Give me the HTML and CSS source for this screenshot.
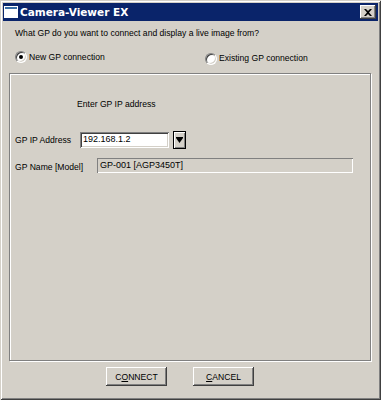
FILE: index.html
```html
<!DOCTYPE html>
<html lang="en">
<head>
  <meta charset="UTF-8">
  <title>Camera-Viewer EX</title>
  <link rel="stylesheet" href="styles.css">
</head>
<body>

  <div class="window">
    <div class="titlebar">
      <svg class="app-icon" width="14" height="12" viewBox="0 0 14 12">
        <rect x="0.5" y="0.5" width="13" height="11" fill="#fff" stroke="#fff"/>
        <rect x="1" y="1" width="12" height="2" fill="#3a6ea5"/>
      </svg>
      <span class="title">Camera-Viewer EX</span>
      <button class="close-btn">
        <svg width="8" height="7" viewBox="0 0 8 7">
          <path d="M0 0h2l2 2 2-2h2L5 3.5 8 7H6L4 5 2 7H0l3-3.5z" fill="#000"/>
        </svg>
      </button>
    </div>

    <div class="content">
      <p class="question">What GP do you want to connect and display a live image from?</p>

      <div class="radios">
        <label class="radio checked"><span class="dot"></span>New GP connection</label>
        <label class="radio second"><span class="dot"></span>Existing GP connection</label>
      </div>

      <div class="group">
        <div class="hint">Enter GP IP address</div>

        <div class="row ip-row">
          <span class="field-label">GP IP Address</span>
          <div class="textbox">192.168.1.2</div>
          <button class="drop-btn">
            <svg width="7" height="6" viewBox="0 0 7 6"><path d="M0 0h7v1L3.5 6 0 1z" fill="#000"/></svg>
          </button>
        </div>

        <div class="row name-row">
          <span class="field-label">GP Name [Model]</span>
          <div class="textbox readonly">GP-001 [AGP3450T]</div>
        </div>
      </div>

      <div class="actions">
        <button class="btn">C<u>O</u>NNECT</button>
        <button class="btn"><u>C</u>ANCEL</button>
      </div>
    </div>
  </div>

</body>
</html>
```

FILE: styles.css
```css
body {
  margin: 0;
  background: #d4d0c8;
  font-family: "Liberation Sans", Arial, sans-serif;
  font-size: 8.6px;
  color: #000;
  white-space: nowrap;
}
.window {
  width: 381px;
  height: 400px;
  box-sizing: border-box;
  padding: 3px;
  background: #d4d0c8;
  box-shadow: inset 1px 1px #d4d0c8, inset -1px -1px #404040,
              inset 2px 2px #fff, inset -2px -2px #808080;
  display: flex;
  flex-direction: column;
}
.titlebar {
  height: 18px;
  background: #0a246a;
  display: flex;
  align-items: center;
  padding: 0 2px 0 1px;
}
.app-icon {
  display: block;
  margin-right: 2px;
}
.title {
  color: #fff;
  font-family: "DejaVu Sans", Verdana, sans-serif;
  font-weight: bold;
  font-size: 10.5px;
  flex: 1;
}
.close-btn {
  width: 16px;
  height: 14px;
  padding: 0;
  border: none;
  background: #d4d0c8;
  box-shadow: inset -1px -1px #404040, inset 1px 1px #fff,
              inset -2px -2px #808080;
  display: flex;
  align-items: center;
  justify-content: center;
}
.content {
  flex: 1;
  display: flex;
  flex-direction: column;
}
.question {
  margin: 6px 0 0 12px;
  line-height: 13px;
}
.radios {
  display: flex;
  margin-top: 9px;
  line-height: 13px;
}
.radio {
  display: flex;
  align-items: center;
  flex: none;
}
.radio.checked {
  margin-left: 12px;
  width: 190px;
}
.radio.second {
  margin-top: 3px;
}
.dot {
  width: 12px;
  height: 12px;
  box-sizing: border-box;
  border-radius: 50%;
  margin-right: 2px;
  background: #fff;
  border: 1px solid;
  border-color: #808080 #fff #fff #808080;
  box-shadow: inset 1px 1px #404040, inset -1px -1px #d4d0c8;
  position: relative;
}
.checked .dot::after {
  content: "";
  position: absolute;
  left: 3px;
  top: 3px;
  width: 4px;
  height: 4px;
  border-radius: 50%;
  background: #000;
}
.group {
  margin: 8px 7px 0 6px;
  height: 288px;
  box-sizing: border-box;
  border: 1px solid #808080;
  box-shadow: inset 1px 1px #fff, 1px 1px #fff;
  padding: 0 0 0 5px;
}
.hint {
  margin: 23px 0 0 62px;
  line-height: 14px;
}
.row {
  display: flex;
  align-items: center;
}
.ip-row {
  margin-top: 20px;
  height: 18px;
}
.name-row {
  margin-top: 9px;
  height: 15px;
}
.field-label {
  width: 65px;
  flex: none;
}
.textbox {
  width: 89px;
  height: 16px;
  box-sizing: border-box;
  padding: 1px 0 0 3px;
  line-height: 13px;
  background: #fff;
  box-shadow: inset 1px 1px #808080, inset -1px -1px #fff,
              inset 2px 2px #404040, inset -2px -2px #d4d0c8;
  font-size: 9px;
}
.drop-btn {
  width: 13px;
  height: 18px;
  margin-left: 4px;
  padding: 0;
  border: 1px solid #000;
  background: #d4d0c8;
  box-shadow: inset 1px 1px #fff, inset -1px -1px #808080;
  display: flex;
  align-items: center;
  justify-content: center;
}
.name-row .field-label {
  width: 82px;
  padding-top: 3px;
}
.textbox.readonly {
  width: 256px;
  height: 15px;
  background: #d4d0c8;
  box-shadow: inset 1px 1px #808080, inset -1px -1px #fff;
}
.actions {
  display: flex;
  gap: 26px;
  margin: 6px 0 0 103px;
}
.btn {
  width: 61px;
  height: 19px;
  padding: 0;
  border: none;
  background: #d4d0c8;
  font-family: inherit;
  font-size: 8.6px;
  color: #000;
  box-shadow: inset -1px -1px #404040, inset 1px 1px #fff,
              inset -2px -2px #808080;
}
```
